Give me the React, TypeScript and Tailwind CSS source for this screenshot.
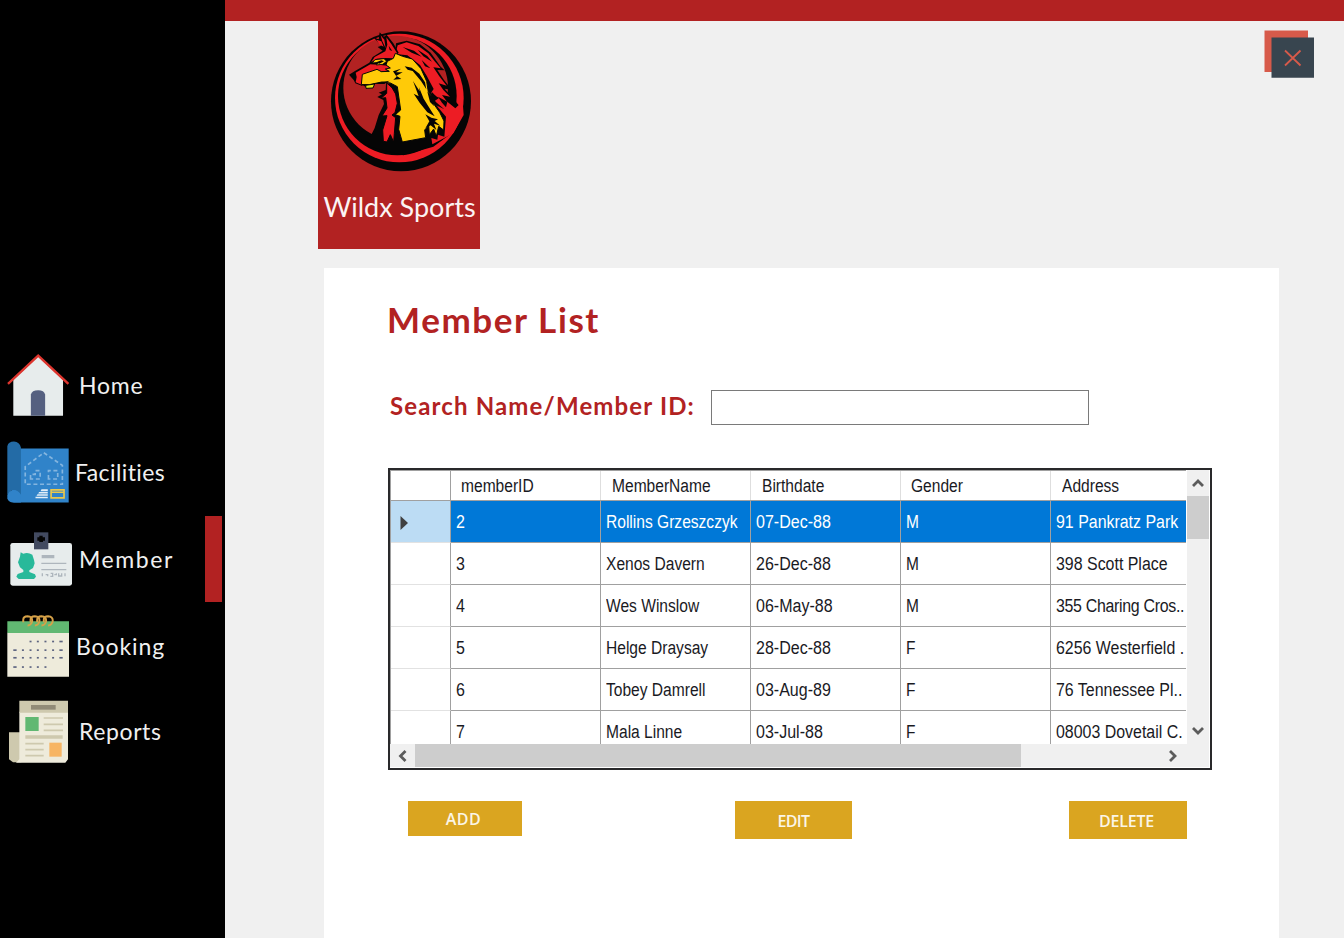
import React from "react";

const gothic = "font-['Lato',sans-serif]";
const grid = "font-['Liberation_Sans',sans-serif]";

function WolfLogo() {
  return (
    <svg className="block h-[142px] w-[142px]" viewBox="60 90 426 426">
      <circle cx="273" cy="304" r="210" fill="#050505" />
      <circle cx="268" cy="294" r="193" fill="#ed1c24" />
      <circle cx="262" cy="288" r="178" fill="#050505" />
      <ellipse cx="257" cy="263" rx="157" ry="156" fill="#b22222" />
      {/* shoulders and shadow under the neck */}
      <path d="M92 300 Q112 372 181 410 L194 384 L206 345 L222 312 L220 300 L202 291 L216 283 L206 278 L227 270 L228 252 L290 240 L365 300 L420 350 L425 400 L370 440 L280 466 L180 440 L115 385Z" fill="#050505" />
      {/* mane */}
      <path d="M258 130 L290 122 L330 133 L362 158 L392 200 L404 211 L382 210 L402 240 L426 270 L404 266 L428 294 L450 320 L440 370 L397 420 L370 434 L340 350 L300 200 L255 164Z" fill="#050505" />
      <path d="M263 136 L290 127 L325 138 L355 160 L374 184 L392 205 L370 202 L388 229 L410 257 L386 250 L400 270 L420 290 L396 285 L410 304 L436 325 L458 304 L461 345 L430 400 L367 433 L364 414 L382 419 L384 404 L403 410 L408 350 L378 315 L403 328 L374 303 L387 294 L363 279 L371 267 L350 227 L330 195 L292 166 L256 162Z" fill="#ed1c24" />
      <path d="M278 141 L312 152 L335 170 L305 158Z M323 149 L352 168 L366 185 L340 169Z M335 180 L361 205 L345 199Z M384 290 L412 305 L408 322 L396 308Z" fill="#050505" />
      {/* ears, brow and muzzle */}
      <path d="M190 112 L206 118 L209 97 L222 110 L230 104 L250 130 L266 158 L256 168 L248 181 L236 190 L244 206 L241 218 L224 222 L193 218 L162 230 L157 258 L136 250 L131 240 L117 224 L135 213 L178 188 L188 171 L218 152 L203 141 L214 137Z" fill="#050505" />
      <path d="M229 112 L244 132 L261 159 L250 175 L226 174 L200 176 L184 186 L194 171 L226 154 L232 134Z M199 119 L214 124 L221 140 L209 134Z M212 106 L223 119 L227 145 L217 124Z" fill="#ed1c24" />
      <path d="M236 137 L247 153 L239 150Z" fill="#050505" />
      <path d="M137 218 L181 193 L205 194 L232 197 L242 209 L222 214 L193 212 L162 223 L155 254 L137 247 L140 231Z" fill="#ed1c24" />
      {/* face and neck */}
      <path d="M157 223 L201 208 L214 215 L238 214 L226 207 L241 204 L228 195 L232 184 L250 175 L256 160 L278 169 L307 177 L333 206 L350 244 L355 276 L369 291 L365 303 L389 337 L402 363 L401 390 L386 379 L379 409 L371 387 L358 404 L356 377 L344 390 L347 413 L277 426 L266 388 L270 349 L256 344 L272 330 L262 260 L241 249 L215 246 L178 254 L154 254Z" fill="#ffca08" stroke="#050505" strokeWidth="3" />
      <path d="M187 189 L195 179 L222 176 L230 184 L218 193 L199 195 L206 187Z" fill="#ffca08" stroke="#050505" strokeWidth="2.5" />
      <path d="M199 187 L214 181 L222 184 L208 191Z" fill="#050505" />
      <path d="M154 253 L178 254 L215 246 L239 242 L223 252 L193 252 L187 264 L166 260Z" fill="#050505" />
      <path d="M167 256 L194 252 L189 264 L168 265Z" fill="#e5e813" stroke="#050505" strokeWidth="3" />
      {/* throat */}
      <path d="M230 249 L246 263 L257 282 L262 310 L255 338 L246 345 L257 353 L253 400 L251 426 L241 404 L231 426 L220 424 L218 390 L231 347 L216 348 L231 324 L227 293 L213 295 L230 280Z" fill="#ed1c24" stroke="#050505" strokeWidth="3" />
      {/* fur strokes */}
      <path d="M284 199 L305 203 L328 221 L345 247 L349 268 L333 243 L308 213 L293 209Z M309 243 L329 274 L327 262 L341 296 L362 330 L374 349 L352 337 L329 308 L311 281 L326 289Z M352 275 L365 288 L365 275 L378 289 L373 299 L386 322 L370 308 L372 318 L360 306Z M249 214 L273 206 L258 217 L278 217 L259 227 L274 237 L250 239 L260 230Z" fill="#050505" />
      <path d="M346 343 L364 353 L384 358 L374 363 L391 377 L372 371 L379 390 L362 376 L346 385 L358 364Z" fill="#050505" />
    </svg>
  );
}

function HomeIcon() {
  return (
    <svg className="block h-[62px] w-[62px]" viewBox="21 27 187 187">
      <path d="M40 105 L115 34 L190 105 V213 H40Z" fill="#e7ecec" />
      <path d="M24 117 L115 32 L206 117" fill="none" stroke="#dd352e" strokeWidth="7" />
      <path d="M93 213 V149 Q96 136 115 136 Q133 136 136 149 V213Z" fill="#556080" />
    </svg>
  );
}

function FacilitiesIcon() {
  return (
    <svg className="block h-[62px] w-[62px]" viewBox="21 288 187 186">
      <path d="M58 310 H207 V473 H40 L35 440Z" fill="#3083c9" />
      <path d="M22 303 Q25 289 42 289 Q59 291 63 307 V450 Q40 420 22 450Z" fill="#236ba6" />
      <path d="M22 452 Q24 437 42 435 Q60 438 63 452 V473 H37 Q24 470 22 460Z" fill="#3083c9" />
      <g fill="none" stroke="#84b5df" strokeWidth="5" strokeDasharray="12 8">
        <path d="M132 323 L188 361 V418 H76 V365 L132 323" />
        <path d="M92 402 V388 H106 V377 H121 V402Z M146 402 V377 H174 V402Z" />
      </g>
      <path d="M125 433 H144 V439 H122Z M118 441 H144 V446 H115Z M113 448 H144 V453 H110Z M107 456 H144 V460 H107Z" fill="#e4eff8" />
      <path d="M154 435 H193 V459 H154Z M154 442 H193" fill="none" stroke="#ebc84a" strokeWidth="5" />
    </svg>
  );
}

function MemberIcon() {
  return (
    <svg className="block h-[54px] w-[62px]" viewBox="30 66 186 162">
      <rect x="31" y="99" width="185" height="128" rx="7" fill="#e7ecec" />
      <path d="M102 67 H145 V118 H102Z" fill="#424a60" />
      <path d="M118 77 H128 V82 H135 V92 H129 V96 H118 V92 H112 V82 H118Z" fill="#050505" />
      <path d="M62 127 L70 131 Q84 126 97 134 L102 150 L104 160 L99 174 L88 181 V186 L105 193 L108 200 L102 207 H56 L49 200 L53 192 L70 186 V180 L60 172 L54 157 L60 140Z" fill="#28b99a" />
      <path d="M125 135 H163 V145 H125Z M124 158 H199 V162 H124Z M124 177 H199 V181 H124Z" fill="#aeb6bd" />
      <path d="M127 190 V199 M137 194 H143 V199 M152 190 H158 V199 H151 M163 194 H169 V190 M176 190 V198 H185 V190 M195 190 V199" fill="none" stroke="#aeb6bd" strokeWidth="4" />
    </svg>
  );
}

const days = [
  [125, 2, 6],
  [151, 0, 6],
  [174, 0, 6],
  [202, 0, 4],
];

function BookingIcon() {
  return (
    <svg className="block h-[62px] w-[62px]" viewBox="21 45 187 186">
      <path d="M22 98 H208 V231 H22Z" fill="#eeebdb" />
      <path d="M22 63 H208 V99 H22Z" fill="#61b872" />
      <g fill="none" stroke="#d6a148" strokeWidth="6">
        {[69, 91, 111, 131].map((x) => (
          <path key={x} d={`M${x + 1} 66 V59 Q${x + 1} 48 ${x + 14} 48 Q${x + 29} 49 ${x + 28} 63 Q${x + 25} 76 ${x + 14} 76`} />
        ))}
      </g>
      {days.map(([y, from, to]) =>
        [45, 69, 92, 114, 137, 160, 184].slice(from, to + 1).map((x) => (
          <rect key={`${x}-${y}`} x={x === 45 || x === 184 ? x - 5 : x - 3} y={y - 3} width={x === 45 || x === 184 ? 10 : 6} height="5" fill="#5c6380" />
        ))
      )}
    </svg>
  );
}

function ReportsIcon() {
  return (
    <svg className="block h-[63px] w-[59px]" viewBox="27 300 177 189">
      <path d="M27 397 H64 V487 H39 L27 478Z" fill="#cec9ae" />
      <path d="M58 335 H204 V478 L196 488 H48 L58 478Z" fill="#eeebdb" />
      <path d="M58 302 H204 V338 H58Z" fill="#cec9ae" />
      <path d="M93 315 H167 V329 H93Z" fill="#918b77" />
      <path d="M76 351 H116 V393 H76Z" fill="#61b872" />
      <path d="M148 428 H185 V470 H148Z" fill="#f7b563" />
      <path d="M131 354 H189 M131 373 H189 M131 391 H189 M76 431 H131 M76 449 H131 M76 467 H131" stroke="#cec9ae" strokeWidth="5" />
      <path d="M76 411 H188" stroke="#cec9ae" strokeWidth="10" />
    </svg>
  );
}

const nav = [
  { label: "Home", icon: <HomeIcon />, row: "h-[87px] pl-[7px]", text: "ml-[10px] tracking-[0.8px]" },
  { label: "Facilities", icon: <FacilitiesIcon />, row: "h-[87px] pl-[7px]", text: "ml-[6px] tracking-[0.4px]" },
  { label: "Member", icon: <MemberIcon />, row: "h-[87px] pl-[10px]", text: "ml-[7px] tracking-[1.6px]", active: true },
  { label: "Booking", icon: <BookingIcon />, row: "h-[87px] pl-[7px]", text: "ml-[7px] tracking-[0.9px]" },
  { label: "Reports", icon: <ReportsIcon />, row: "h-[84px] pl-[9px]", text: "ml-[11px] tracking-[0.6px]" },
];

function Sidebar() {
  return (
    <nav className="flex w-[225px] shrink-0 flex-col bg-black pt-[341px]">
      {nav.map((n) => (
        <div key={n.label} className={`flex items-center ${n.row}`}>
          {n.icon}
          <span className={`${gothic} ${n.text} pt-px text-[23px] leading-none whitespace-nowrap text-[#f0f0f0]`}>{n.label}</span>
          {n.active && <div className="mt-px mr-[3px] ml-auto h-[86px] w-[17px] bg-[#b22222]" />}
        </div>
      ))}
    </nav>
  );
}

const rows = [
  ["2", "Rollins Grzeszczyk", "07-Dec-88", "M", "91 Pankratz Park"],
  ["3", "Xenos Davern", "26-Dec-88", "M", "398 Scott Place"],
  ["4", "Wes Winslow", "06-May-88", "M", "355 Charing Cros.."],
  ["5", "Helge Draysay", "28-Dec-88", "F", "6256 Westerfield ."],
  ["6", "Tobey Damrell", "03-Aug-89", "F", "76 Tennessee Pl.."],
  ["7", "Mala Linne", "03-Jul-88", "F", "08003 Dovetail C."],
];
const scales = ["scale-x-[0.89]", "scale-x-[0.865]", "scale-x-[0.89]", "scale-x-[0.86]", "scale-x-[0.885]"];
const headings = ["memberID", "MemberName", "Birthdate", "Gender", "Address"];

function Arrow({ d }: { d: string }) {
  return (
    <svg className="block h-[12px] w-[12px]" viewBox="0 0 12 12">
      <path d={d} fill="none" stroke="#5c5c5c" strokeWidth="2.8" />
    </svg>
  );
}

function MemberGrid() {
  return (
    <div className={`${grid} flex h-[302px] w-[824px] flex-col border-2 border-[#29292b] bg-white text-[18px] text-[#1a1a1f]`}>
      <div className="flex h-[274px]">
        <div className="h-[274px] w-[796px] overflow-hidden border-t border-l border-[#a0a0a0]">
          <div className="flex h-[30px] w-[810px] border-b border-[#a0a0a0]">
            <div className="w-[60px] shrink-0 border-r border-[#a0a0a0]" />
            {headings.map((h, i) => (
              <div key={h} className={`flex w-[150px] shrink-0 items-center border-r border-[#dedede] pt-px ${i % 3 === 0 ? "pl-[10px]" : "pl-[11px]"}`}>
                <span className="origin-left scale-x-[0.865] whitespace-nowrap">{h}</span>
              </div>
            ))}
          </div>
          {rows.map((r, i) => (
            <div key={r[0]} className={`flex h-[42px] w-[810px] ${i === 0 ? "text-white" : ""}`}>
              <div className={`flex w-[60px] shrink-0 items-center border-r border-r-[#a0a0a0] border-b border-b-[#e2e2e2] pl-[9px] ${i === 0 ? "bg-[#bcdcf4]" : "bg-white"}`}>
                {i === 0 && (
                  <svg className="mt-[2px] block h-[16px] w-[9px]" viewBox="0 0 9 16">
                    <path d="M0.5 1 L8 8 L0.5 15Z" fill="#404040" />
                  </svg>
                )}
              </div>
              {r.map((c, j) => (
                <div key={j} className={`flex w-[150px] shrink-0 items-center border-r border-b border-[#a0a0a0] pt-[2px] pl-[5px] ${i === 0 ? "bg-[#0078d7]" : "bg-white"}`}>
                  <span className={`origin-left whitespace-nowrap ${j === 4 && i === 2 ? "-tracking-[0.35px]" : ""} ${scales[j]}`}>{c}</span>
                </div>
              ))}
            </div>
          ))}
        </div>
        <div className="ml-px flex w-[22px] flex-col items-center bg-[#f0f0f0]">
          <div className="flex h-[26px] items-center"><Arrow d="M1 9 L6 4 L11 9" /></div>
          <div className="h-[43px] w-[22px] bg-[#cdcdcd]" />
          <div className="mt-auto flex h-[26px] items-center"><Arrow d="M1 3 L6 8 L11 3" /></div>
        </div>
      </div>
      <div className="flex h-[23px] w-[819px] items-center bg-[#f0f0f0]">
        <div className="flex w-[25px] justify-center"><Arrow d="M8.5 1 L3.5 6 L8.5 11" /></div>
        <div className="h-[23px] w-[606px] bg-[#cdcdcd]" />
        <div className="mr-[30px] ml-auto"><Arrow d="M3 1 L8 6 L3 11" /></div>
      </div>
    </div>
  );
}

export default function App() {
  return (
    <div className="flex h-[938px] w-[1344px] overflow-hidden bg-[#f0f0f0]">
      <Sidebar />
      <main className="flex flex-1 flex-col">
        <div className="h-[21px] shrink-0 bg-[#b22222]" />
        <header className="flex h-[247px] shrink-0 items-start justify-between pr-[30px] pl-[93px]">
          <div className="flex h-[228px] w-[162px] flex-col items-center bg-[#b22222] pt-[9px]">
            <div className="ml-[4px]"><WolfLogo /></div>
            <span className={`${gothic} mt-[20px] ml-px text-[27px] leading-[30px] whitespace-nowrap text-[#fbf3f3]`}>Wildx Sports</span>
          </div>
          <svg className="mt-[9px] block h-[48px] w-[50px]" viewBox="0 0 50 48" aria-label="Close">
            <path d="M0.5 0.5H44V42H0.5Z" fill="#d75a4a" />
            <path d="M7.5 7.5H50V47.7H7.5Z" fill="#38454f" />
            <path d="M21 20.5L36.5 35.5M36.5 20.5L21 35.5" stroke="#d75a4a" strokeWidth="1.8" />
          </svg>
        </header>
        <section className="ml-[99px] flex w-[955px] flex-1 flex-col bg-white pl-[64px]">
          <h1 className={`${gothic} mt-[30px] -ml-px text-[35px] leading-[42px] font-bold tracking-[1.6px] whitespace-nowrap text-[#b22222]`}>Member List</h1>
          <div className="mt-[50px] flex h-[35px] items-center">
            <label className={`${gothic} w-[323px] pb-[3px] pl-[2px] text-[24px] leading-[30px] font-bold tracking-[1.15px] whitespace-nowrap text-[#b22222]`}>Search Name/Member ID:</label>
            <input className="h-[35px] w-[378px] border border-[#7a7a7a] bg-white px-2 outline-none" />
          </div>
          <div className="mt-[43px]"><MemberGrid /></div>
          <div className="mt-[31px] flex items-start pl-[20px] font-['Open_Sans',sans-serif] text-[16px] font-semibold text-[#fbf5e6]">
            <button className="h-[35px] w-[114px] bg-[#daa520] pt-px pr-[3px] tracking-[0.5px]">ADD</button>
            <button className="ml-[213px] h-[38px] w-[117px] bg-[#daa520] pt-px -tracking-[0.7px]">EDIT</button>
            <button className="ml-[217px] h-[38px] w-[118px] bg-[#daa520] pt-px pr-[3px] -tracking-[0.2px]">DELETE</button>
          </div>
        </section>
      </main>
    </div>
  );
}
